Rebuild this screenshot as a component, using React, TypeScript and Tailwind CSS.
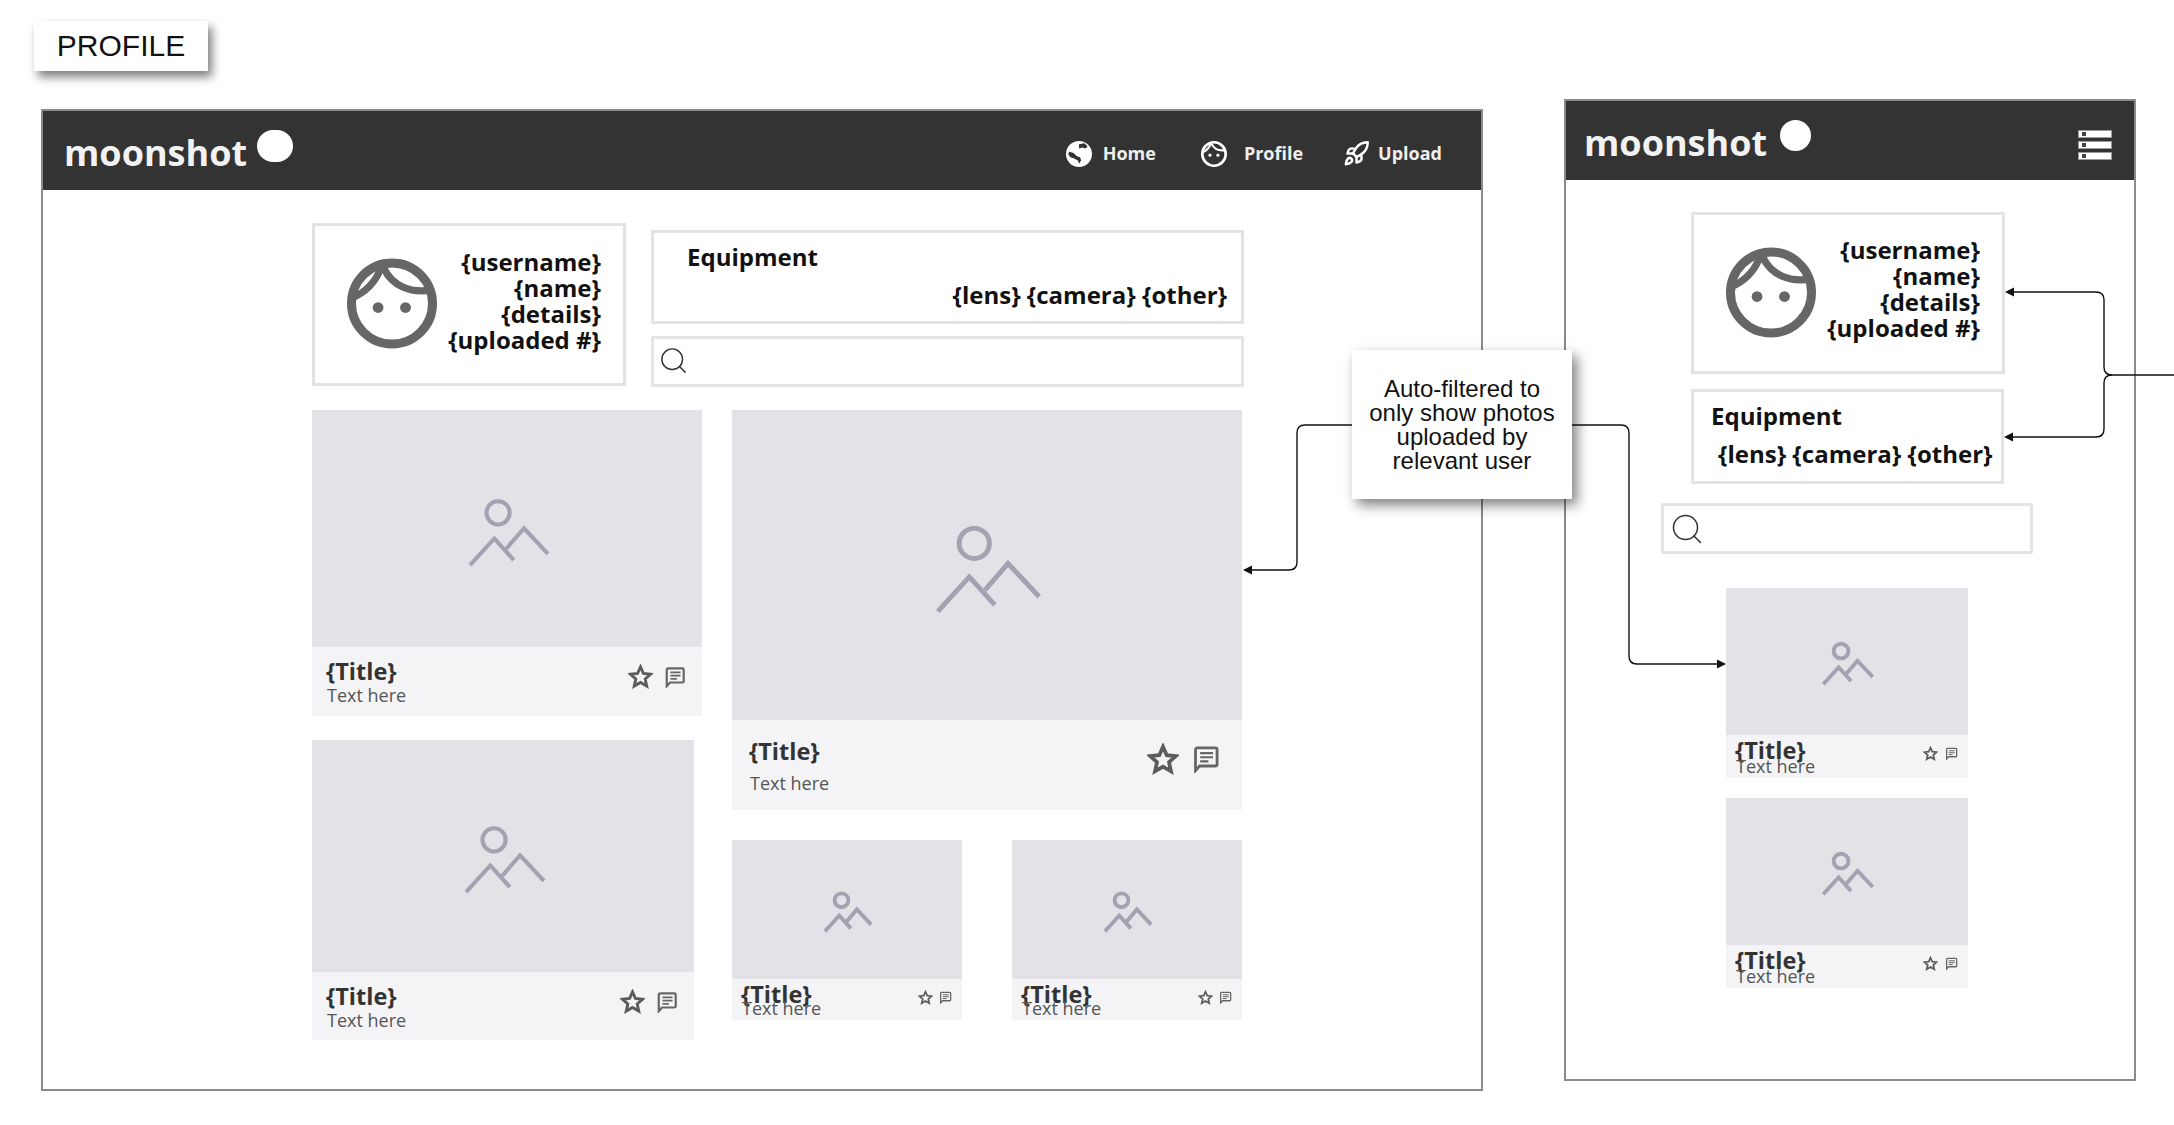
import { Rocket, Search } from "lucide-react";

const FaceIcon = ({ className, stroke }: { className: string; stroke: string }) => (
  <svg viewBox="0 0 100 100" className={className} fill="none" stroke={stroke} strokeWidth="10">
    <ellipse cx="50" cy="50" rx="45" ry="45" />
    <path d="M38 10C31 28 20 38 5 44" strokeWidth="8" />
    <path d="M41 11C50 30 70 39 94 35" strokeWidth="8" />
    <circle cx="34.5" cy="54.5" r="6" fill={stroke} stroke="none" />
    <circle cx="65" cy="54.5" r="6" fill={stroke} stroke="none" />
  </svg>
);

const GlobeIcon = () => (
  <svg viewBox="0 0 24 24" className="h-[26px] w-[26px]">
    <circle cx="12" cy="12" r="12" fill="#fff" />
    <path d="M3 10l4 1 3 3 3 1 1 3-2 3-1-3-4-2-3-1-2-3zM12 3l5-1 3 3-2 2-3-1-3 1z" fill="#333" />
  </svg>
);

const ImageIcon = ({ className, weight }: { className: string; weight: number }) => (
  <svg viewBox="-4 -6 240 207" className={className} fill="none" stroke="#a2a2b0" strokeWidth={weight}>
    <circle cx="84" cy="40" r="34" />
    <path d="M2 193L73 115L130 178" />
    <path d="M108 145L160 85L230 160" />
  </svg>
);

const StarIcon = ({ className }: { className: string }) => (
  <svg viewBox="0 0 24 24" className={className} fill="none" stroke="#5c5c5c" strokeWidth="2.8">
    <path d="M12 2.8l2.8 6.3 6.9.7-5.2 4.6 1.500 6.800-6-3.500-6 3.500 1.500-6.800-5.200-4.600 6.900-.7z" />
  </svg>
);

const CommentIcon = ({ className }: { className: string }) => (
  <svg viewBox="0 0 24 24" className={className} fill="none" stroke="#666" strokeWidth="2.4">
    <path d="M3 22V4a1.500 1.500 0 0 1 1.500-1.500h15.500A1.500 1.500 0 0 1 21.500 4v12.500a1.500 1.500 0 0 1-1.500 1.500H6.500z" />
    <path d="M7 7h11M7 10.500h11M7 14h7" strokeWidth="1.800" />
  </svg>
);

const variants = {
  medium: {
    imageBox: "pt-[7px] pl-[3px]",
    image: "h-[71px] w-[82px]",
    weight: 12,
    caption: "pl-[14px] pr-[16px] pt-[12px]",
    textGap: "mt-[2px]",
    icons: "mt-[5px] gap-[11px]",
    star: "h-[25px] w-[25px]",
    comment: "h-[22px] w-[22px]",
  },
  large: {
    imageBox: "pt-[8px] pl-[3px]",
    image: "h-[92px] w-[107px]",
    weight: 11,
    caption: "pl-[17px] pr-[22px] pt-[19px]",
    textGap: "mt-[10px]",
    icons: "mt-[4px] gap-[13px]",
    star: "h-[32px] w-[32px]",
    comment: "h-[28px] w-[28px]",
  },
  small: {
    imageBox: "pt-[4px] pl-[2px]",
    image: "h-[42px] w-[50px]",
    weight: 19,
    caption: "pl-[9px] pr-[10px] pt-[3px]",
    textGap: "mt-[-8px]",
    icons: "mt-[8px] gap-[6px]",
    star: "h-[15px] w-[15px]",
    comment: "h-[13px] w-[13px]",
  },
  mobile: {
    imageBox: "pt-[4px] pl-[2px]",
    image: "h-[45px] w-[52px]",
    weight: 18,
    caption: "pl-[9px] pr-[10px] pt-[3px]",
    textGap: "mt-[-6px]",
    icons: "mt-[8px] gap-[7px]",
    star: "h-[15px] w-[15px]",
    comment: "h-[13px] w-[13px]",
  },
};

const PhotoCard = ({
  size,
  className,
  imageClass,
  captionClass,
}: {
  size: "medium" | "large" | "small" | "mobile";
  className: string;
  imageClass: string;
  captionClass: string;
}) => {
  const v = variants[size];
  return (
    <div className={className}>
      <div className={`flex items-center justify-center bg-[#e2e2e7] ${v.imageBox} ${imageClass}`}>
        <ImageIcon className={v.image} weight={v.weight} />
      </div>
      <div className={`flex items-start bg-[#f4f4f6] ${v.caption} ${captionClass}`}>
        <div>
          <div className="text-[23.500px] leading-[24px] font-bold text-[#333]">{"{Title}"}</div>
          <div className={`pl-[1px] text-[18px] leading-[20px] text-[#555] ${v.textGap}`}>Text here</div>
        </div>
        <div className={`ml-auto flex items-center ${v.icons}`}>
          <StarIcon className={v.star} />
          <CommentIcon className={v.comment} />
        </div>
      </div>
    </div>
  );
};

const Logo = ({ moonClass }: { moonClass: string }) => (
  <div className="flex items-start">
    <span className="text-[36px] leading-[48px] font-bold text-[#f2f2f2]">moonshot</span>
    <div className={`rounded-full bg-white ${moonClass}`} />
  </div>
);

const ProfileBox = ({ className }: { className: string }) => (
  <div className={`flex items-center border-[3px] border-[#e2e2e4] bg-white pr-[22px] pl-[32px] ${className}`}>
    <FaceIcon className="mt-[-2px] h-[91px] w-[90px]" stroke="#666" />
    <div className="ml-auto pb-[8px] text-right text-[24px] leading-[26px] font-bold text-[#111]">
      <div>{"{username}"}</div>
      <div>{"{name}"}</div>
      <div>{"{details}"}</div>
      <div>{"{uploaded #}"}</div>
    </div>
  </div>
);

const HamburgerRow = () => (
  <div className="flex h-[8px] w-[34px] items-center border border-[#999] bg-white pl-[3px]">
    <div className="h-[4px] w-[4px] bg-[#444]" />
  </div>
);

export default function App() {
  return (
    <div className="relative h-[1125px] w-[2174px] overflow-hidden bg-white font-['Open_Sans',sans-serif]">
      <div className="pt-[21px] pl-[34px]">
        <div className="flex h-[50px] w-[174px] items-center justify-center bg-white pb-[2px] font-['Liberation_Sans',sans-serif] text-[30px] text-[#111] shadow-[4px_6px_9px_rgba(0,0,0,0.5)]">
          PROFILE
        </div>
      </div>

      <div className="mt-[28px] ml-[41px] flex items-start">
        {/* desktop */}
        <div className="mt-[10px] h-[982px] w-[1442px] border-2 border-[#8a8a8a] bg-white">
          <div className="flex h-[79px] items-start bg-[#333] pl-[21px]">
            <div className="mt-[18px]">
              <Logo moonClass="mt-[1px] ml-[10px] h-[32px] w-[36px]" />
            </div>
            <nav className="mt-[6px] ml-auto flex items-center self-center pr-[39px] text-[18px] font-bold text-[#eee]">
              <GlobeIcon />
              <span className="ml-[11px]">Home</span>
              <FaceIcon className="ml-[45px] h-[26px] w-[26px]" stroke="#fff" />
              <span className="ml-[17px]">Profile</span>
              <Rocket className="ml-[40px] h-[27px] w-[27px] text-white" strokeWidth={2.2} />
              <span className="ml-[8px]">Upload</span>
            </nav>
          </div>
          <div className="pt-[33px] pl-[269px]">
            <div className="flex items-start gap-[25px]">
              <ProfileBox className="h-[163px] w-[314px]" />
              <div className="mt-[7px] flex w-[593px] flex-col gap-[12px]">
                <div className="h-[94px] border-[3px] border-[#e2e2e4] px-[33px] pt-[9px] pr-[14px] text-[24px] font-bold text-[#111]">
                  <div className="leading-[30px]">Equipment</div>
                  <div className="mt-[8px] text-right leading-[30px]">{"{lens} {camera} {other}"}</div>
                </div>
                <div className="flex h-[51px] items-center rounded-[2px] border-[3px] border-[#e4e4e8] pb-[2px] pl-[4px]">
                  <Search className="h-[31px] w-[31px] text-[#333]" strokeWidth={1.15} />
                </div>
              </div>
            </div>
            <div className="mt-[23px] flex items-start gap-[30px]">
              <div className="flex w-[390px] flex-col gap-[24px]">
                <PhotoCard size="medium" className="w-[390px]" imageClass="h-[237px]" captionClass="h-[69px]" />
                <PhotoCard size="medium" className="w-[382px]" imageClass="h-[232px]" captionClass="h-[68px]" />
              </div>
              <div className="flex w-[510px] flex-col gap-[30px]">
                <PhotoCard size="large" className="w-[510px]" imageClass="h-[310px]" captionClass="h-[90px]" />
                <div className="flex gap-[50px]">
                  <PhotoCard size="small" className="w-[230px]" imageClass="h-[139px]" captionClass="h-[41px]" />
                  <PhotoCard size="small" className="w-[230px]" imageClass="h-[139px]" captionClass="h-[41px]" />
                </div>
              </div>
            </div>
          </div>
        </div>

        {/* mobile */}
        <div className="ml-[81px] h-[982px] w-[572px] border-2 border-[#8a8a8a] bg-white">
          <div className="flex h-[79px] items-start bg-[#333] pr-[22px] pl-[18px]">
            <div className="mt-[18px]">
              <Logo moonClass="mt-[1px] ml-[13px] h-[31px] w-[31px]" />
            </div>
            <div className="mt-[29px] ml-auto flex flex-col gap-[3px]">
              <HamburgerRow />
              <HamburgerRow />
              <HamburgerRow />
            </div>
          </div>
          <div className="flex flex-col pt-[32px]">
            <ProfileBox className="ml-[125px] h-[162px] w-[314px]" />
            <div className="mt-[15px] ml-[125px] h-[95px] w-[313px] border-[3px] border-[#e2e2e4] pt-[9px] pl-[17px] text-[24px] leading-[30px] font-bold text-[#111]">
              <div>Equipment</div>
              <div className="mt-[8px] ml-[7px] whitespace-nowrap">{"{lens} {camera} {other}"}</div>
            </div>
            <div className="mt-[19px] ml-[95px] flex h-[51px] w-[372px] items-center rounded-[2px] border-[3px] border-[#e4e4e8] pl-[5px]">
              <Search className="h-[36px] w-[36px] text-[#333]" strokeWidth={1} />
            </div>
            <div className="mt-[34px] ml-[160px] flex w-[242px] flex-col gap-[20px]">
              <PhotoCard size="mobile" className="w-[242px]" imageClass="h-[147px]" captionClass="h-[43px]" />
              <PhotoCard size="mobile" className="w-[242px]" imageClass="h-[147px]" captionClass="h-[43px]" />
            </div>
          </div>
        </div>
      </div>

      {/* connectors */}
      <svg className="pointer-events-none absolute inset-0 h-full w-full" viewBox="0 0 2174 1125" fill="none" stroke="#111" strokeWidth="1.400">
        <path d="M1352 425H1305Q1297 425 1297 433V562Q1297 570 1289 570H1250" />
        <path d="M1252 565.500V574.500L1243 570Z" fill="#111" stroke="none" />
        <path d="M1572 425H1621Q1629 425 1629 433V656Q1629 664 1637 664H1720" />
        <path d="M1717 659.500V668.500L1726 664Z" fill="#111" stroke="none" />
        <path d="M2174 375H2112Q2104 375 2104 367V300Q2104 292 2096 292H2012" />
        <path d="M2014 287.500V296.500L2005 292Z" fill="#111" stroke="none" />
        <path d="M2112 375Q2104 375 2104 383V429Q2104 437 2096 437H2012" />
        <path d="M2013 432.500V441.500L2004 437Z" fill="#111" stroke="none" />
      </svg>

      <div className="absolute top-[350px] left-[1352px] flex h-[149px] w-[220px] items-center justify-center bg-white text-center font-['Liberation_Sans',sans-serif] text-[24px] leading-[24px] text-[#111] shadow-[5px_6px_12px_rgba(0,0,0,0.5)]">
        <div>
          Auto-filtered to
          <br />
          only show photos
          <br />
          uploaded by
          <br />
          relevant user
        </div>
      </div>
    </div>
  );
}
